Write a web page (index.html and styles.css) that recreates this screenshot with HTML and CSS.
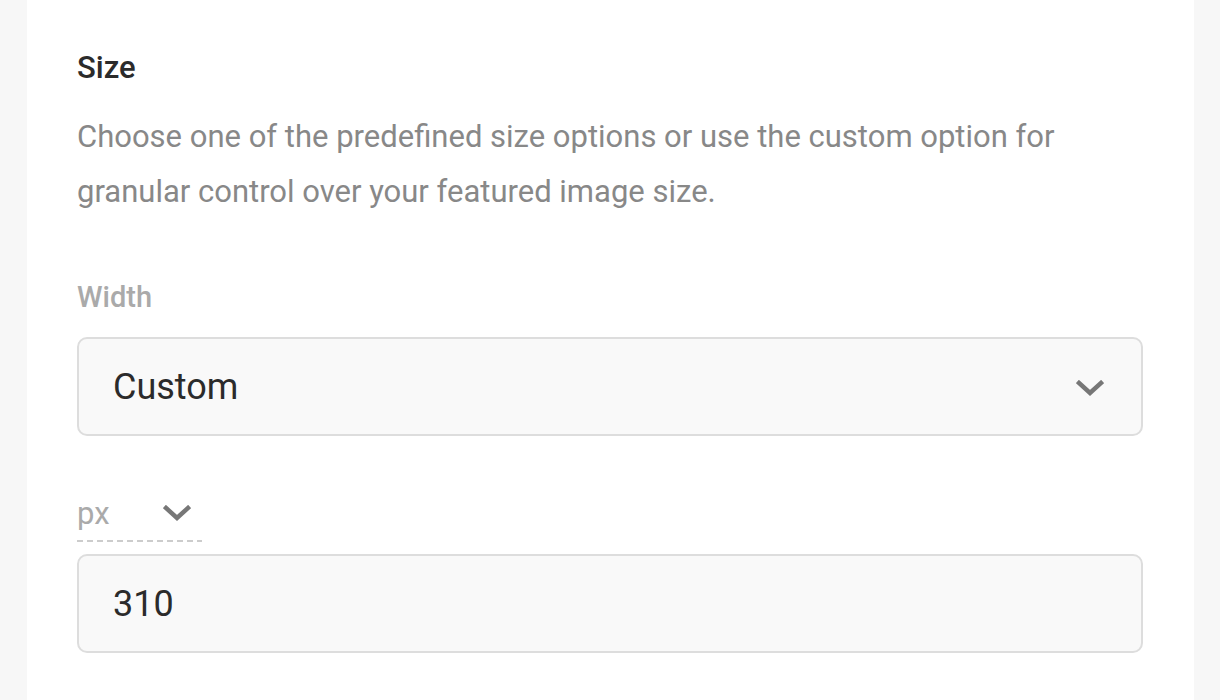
FILE: index.html
```html
<!DOCTYPE html>
<html>
<head lang="en">
    <meta charset="UTF-8">
    <title>Featured image size</title>
    <link rel="stylesheet" href="styles.css">
</head>
<body>
<div class="panel">
    <h3 class="title">Size</h3>
    <p class="desc">Choose one of the predefined size options or use the custom option for granular control over your featured image size.</p>

    <label class="label">Width</label>
    <div class="select">
        <span class="select-value">Custom</span>
        <svg class="chevron" width="28" height="17" viewBox="0 0 28 17">
            <path d="M3 3 L14 13 L25 3" fill="none" stroke="#777" stroke-width="4.5" stroke-linecap="square" stroke-linejoin="miter"/>
        </svg>
    </div>

    <div class="unit">
        <span class="unit-value">px</span>
        <svg class="chevron" width="28" height="17" viewBox="0 0 28 17">
            <path d="M3 3 L14 13 L25 3" fill="none" stroke="#777" stroke-width="4.5" stroke-linecap="square" stroke-linejoin="miter"/>
        </svg>
    </div>
    <div class="input">310</div>
</div>
</body>
</html>
```

FILE: styles.css
```css
* {
    margin: 0;
    padding: 0;
    box-sizing: border-box;
}

body {
    background: #f7f7f7;
    font-family: Roboto, "Liberation Sans", sans-serif;
    height: 700px;
    overflow: hidden;
}

.panel {
    margin-left: 27px;
    width: 1167px;
    height: 700px;
    background: #fff;
    padding: 50px 51px 0 50px;
}

.title {
    font-size: 31px;
    line-height: 36px;
    font-weight: 500;
    color: #2b2b2b;
}

.desc {
    margin-top: 23px;
    font-size: 31px;
    line-height: 55px;
    color: #888;
}

.label {
    display: block;
    margin-top: 61px;
    font-size: 29px;
    line-height: 34px;
    font-weight: 500;
    color: #aaa;
}

.select,
.input {
    height: 99px;
    border: 2px solid #ddd;
    border-radius: 10px;
    background: #f9f9f9;
    padding: 0 36px 0 34px;
    font-size: 36px;
    color: #2b2b2b;
    display: flex;
    align-items: center;
}

.select {
    margin-top: 23px;
    justify-content: space-between;
}

.select .chevron {
    margin: 3px 1px 0 0;
}

.unit {
    margin-top: 60px;
    width: 125px;
    height: 46px;
    display: flex;
    align-items: center;
    justify-content: space-between;
    padding: 0 11px 12px 0;
    background: repeating-linear-gradient(to right, #ccc 0 6px, transparent 6px 10px) bottom left / 100% 2px no-repeat;
}

.unit-value {
    font-size: 31px;
    color: #aaa;
}

.input {
    margin-top: 12px;
}
```
